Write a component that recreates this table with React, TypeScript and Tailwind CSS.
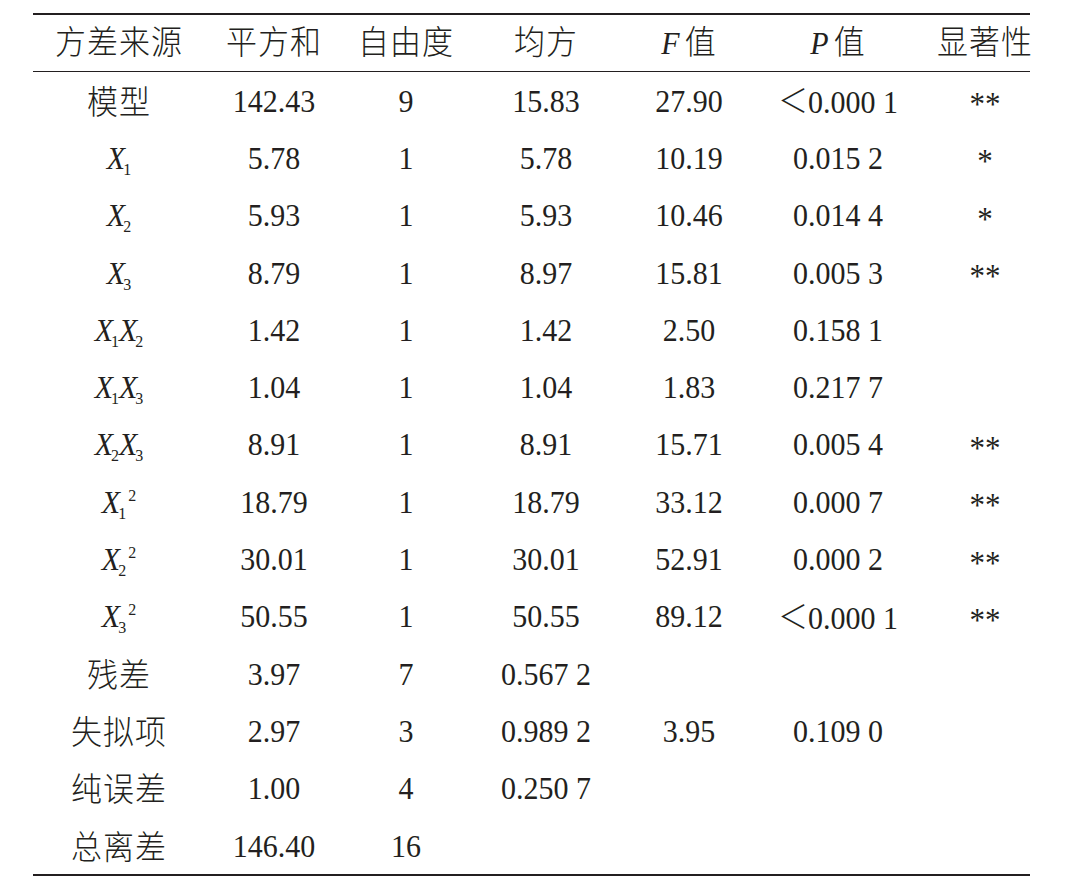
import React from "react";

type Cell = React.ReactNode;

const X = ({ s, p }: { s: string; p?: string }) => (
  <span className="whitespace-nowrap">
    <span className="italic">X</span>
    <span className="text-[16px] relative top-[6px] ml-[-2px]">{s}</span>
    {p ? <span className="text-[16px] relative top-[-11px] ml-[2px]">{p}</span> : null}
  </span>
);

const cjk = "[font-family:'Noto_Sans_CJK_SC','Noto_Sans_CJK_JP',sans-serif] font-light text-[31px] tracking-[1px]";

const C = ({ t }: { t: string }) => <span className={cjk}>{t}</span>;

const Lt = ({ v }: { v: string }) => (
  <span className="whitespace-nowrap">
    <span className="[font-family:'Noto_Sans_CJK_SC',sans-serif] font-light">＜</span>
    {v}
  </span>
);

const Star = ({ n }: { n: number }) => (
  <span className="relative top-[3px] text-[31px]">{n === 2 ? "**" : "*"}</span>
);

const rows: Cell[][] = [
  [<C t="模型" />, "142.43", "9", "15.83", "27.90", <Lt v="0.000 1" />, <Star n={2} />],
  [<X s="1" />, "5.78", "1", "5.78", "10.19", "0.015 2", <Star n={1} />],
  [<X s="2" />, "5.93", "1", "5.93", "10.46", "0.014 4", <Star n={1} />],
  [<X s="3" />, "8.79", "1", "8.97", "15.81", "0.005 3", <Star n={2} />],
  [<span><X s="1" /><X s="2" /></span>, "1.42", "1", "1.42", "2.50", "0.158 1", ""],
  [<span><X s="1" /><X s="3" /></span>, "1.04", "1", "1.04", "1.83", "0.217 7", ""],
  [<span><X s="2" /><X s="3" /></span>, "8.91", "1", "8.91", "15.71", "0.005 4", <Star n={2} />],
  [<X s="1" p="2" />, "18.79", "1", "18.79", "33.12", "0.000 7", <Star n={2} />],
  [<X s="2" p="2" />, "30.01", "1", "30.01", "52.91", "0.000 2", <Star n={2} />],
  [<X s="3" p="2" />, "50.55", "1", "50.55", "89.12", <Lt v="0.000 1" />, <Star n={2} />],
  [<C t="残差" />, "3.97", "7", "0.567 2", "", "", ""],
  [<C t="失拟项" />, "2.97", "3", "0.989 2", "3.95", "0.109 0", ""],
  [<C t="纯误差" />, "1.00", "4", "0.250 7", "", "", ""],
  [<C t="总离差" />, "146.40", "16", "", "", "", ""],
];

const header: Cell[] = [
  <C t="方差来源" />,
  <C t="平方和" />,
  <C t="自由度" />,
  <C t="均方" />,
  <span><span className="italic mr-[5px]">F</span><C t="值" /></span>,
  <span><span className="italic mr-[5px]">P</span><C t="值" /></span>,
  <C t="显著性" />,
];

const cols = "grid grid-cols-[172px_138px_126px_154px_132px_166px_109px]";

const cellCls = (i: number) =>
  "flex items-center justify-center whitespace-nowrap " + (i === 6 ? "pl-[19px]" : "");

export default function App() {
  return (
    <div className="w-[1073px] h-[890px] bg-white pt-[13px] pl-[33px] [font-family:'Liberation_Serif','Times_New_Roman',serif] text-[30px] text-[#231f20] leading-none">
      <div className="w-[997px] border-t-2 border-b-2 border-[#231f20]">
        <div className={cols + " h-[57px] border-b border-[#231f20]"}>
          {header.map((h, i) => (
            <div key={i} className={cellCls(i) + " pb-[4px]"}>
              <div className="scale-y-[1.08] whitespace-nowrap">{h}</div>
            </div>
          ))}
        </div>
        {rows.map((r, ri) => (
          <div key={ri} className={cols + " h-[57.3px]"}>
            {r.map((c, i) => (
              <div key={i} className={cellCls(i)}>
                <div className="scale-y-[1.08] whitespace-nowrap">{c}</div>
              </div>
            ))}
          </div>
        ))}
      </div>
    </div>
  );
}
